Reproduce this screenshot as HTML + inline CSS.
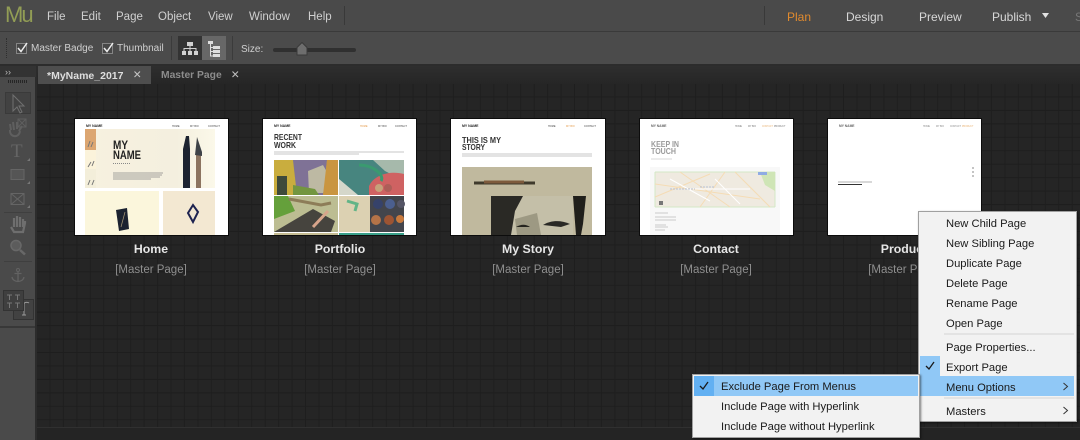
<!DOCTYPE html>
<html><head><meta charset="utf-8">
<style>
html,body{margin:0;padding:0;background:#222}
#r{position:relative;width:1080px;height:440px;overflow:hidden;background:#222;font-family:"Liberation Sans",sans-serif}
.a{position:absolute}
.t{position:absolute;white-space:nowrap;line-height:14px}
.m{color:#d0d0d0;font-size:11.500px;top:10px}
.v{color:#d8d8d8;font-size:12px;top:10px}
.c{color:#cfcfcf;font-size:10px;top:42px}
.name{position:absolute;width:154px;text-align:center;color:#e6e6e6;font-weight:bold;font-size:12.300px;top:242px;line-height:14px}
.mp{position:absolute;width:154px;text-align:center;color:#8f8f8f;font-size:11.500px;top:263px;line-height:14px}
.th{position:absolute;top:119px;width:153px;height:116px;background:#fff;box-shadow:0 0 0 1px #0c0c0c;overflow:hidden}
.th svg{filter:blur(.35px);display:block}
.i{position:absolute;color:#1a1a1a;font-size:11.200px;line-height:20px;height:20px;white-space:nowrap;padding-left:28px;box-sizing:border-box}
.sep{position:absolute;height:2px;background:#e3e3e3}
</style></head><body>
<div id="r">
<!-- menu bar -->
<div class="a" style="left:0;top:0;width:1080px;height:31px;background:#4a4a4a"></div>
<div class="a" style="left:0;top:31px;width:1080px;height:1px;background:#3a3a3a"></div>
<div class="t" style="left:5px;top:3px;font-size:22px;line-height:24px;letter-spacing:-2px;color:#929d55">Mu</div>
<div class="t m" style="left:47px">File</div>
<div class="t m" style="left:81px">Edit</div>
<div class="t m" style="left:116px">Page</div>
<div class="t m" style="left:158px">Object</div>
<div class="t m" style="left:208px">View</div>
<div class="t m" style="left:249px">Window</div>
<div class="t m" style="left:308px">Help</div>
<div class="a" style="left:344px;top:6px;width:1px;height:19px;background:#393939"></div>
<div class="a" style="left:764px;top:6px;width:1px;height:19px;background:#393939"></div>
<div class="t v" style="left:787px;color:#e08a2e">Plan</div>
<div class="t v" style="left:846px">Design</div>
<div class="t v" style="left:919px">Preview</div>
<div class="t v" style="left:992px">Publish</div>
<svg class="a" style="left:1041px;top:13px" width="9" height="6"><path d="M1 0H8L4.500 5Z" fill="#e2e2e2"/></svg>
<div class="t v" style="left:1075px;color:#777">S</div>
<!-- toolbar -->
<div class="a" style="left:0;top:32px;width:1080px;height:32px;background:#4b4b4b"></div>
<div class="a" style="left:0;top:64px;width:1080px;height:2px;background:#2c2c2c"></div>
<div class="a" style="left:6px;top:38px;width:1px;height:20px;border-left:1px dotted #2e2e2e"></div>
<svg class="a" style="left:16px;top:41px" width="150" height="18" fill="none">
<rect x="0.500" y="2.500" width="10" height="10" stroke="#858585" fill="#474747"/>
<path d="M2 7L5 10.500L11 2" stroke="#eee" stroke-width="1.500"/>
<rect x="86.500" y="2.500" width="10" height="10" stroke="#858585" fill="#474747"/>
<path d="M88 7L91 10.500L97 2" stroke="#eee" stroke-width="1.500"/>
</svg>
<div class="t c" style="left:31px">Master Badge</div>
<div class="t c" style="left:117px">Thumbnail</div>
<div class="a" style="left:171px;top:36px;width:1px;height:24px;background:#3b3b3b"></div>
<div class="a" style="left:178px;top:36px;width:24px;height:24px;background:#333"></div>
<div class="a" style="left:202px;top:36px;width:24px;height:24px;background:#676767"></div>
<svg class="a" style="left:177px;top:36px" width="49" height="24" fill="none">
<g fill="#d0d0d0"><rect x="10" y="6" width="6" height="4"/><rect x="5" y="15" width="4" height="4"/><rect x="11" y="15" width="4" height="4"/><rect x="17" y="15" width="4" height="4"/></g>
<path d="M13 10V15M7 15V12.500H19V15" stroke="#d0d0d0"/>
<g fill="#dedede"><rect x="31" y="5" width="5" height="3"/><rect x="36" y="10" width="7" height="3"/><rect x="36" y="14" width="7" height="3"/><rect x="36" y="18" width="7" height="3"/></g>
<path d="M33.500 8V20H36M33.500 11.500H36M33.500 15.500H36" stroke="#dedede"/>
</svg>
<div class="a" style="left:232px;top:36px;width:1px;height:24px;background:#3b3b3b"></div>
<div class="t c" style="left:241px;top:43px">Size:</div>
<div class="a" style="left:273px;top:48px;width:83px;height:4px;background:#303030;border-radius:2px"></div>
<svg class="a" style="left:296px;top:42px" width="12" height="14"><path d="M1 5.500L6 .5L11 5.500V13H1Z" fill="#6e6e6e" stroke="#3a3a3a"/></svg>
<!-- tab strip -->
<div class="a" style="left:37px;top:66px;width:1043px;height:18px;background:linear-gradient(#2e2e2e,#262626)"></div>
<div class="a" style="left:38px;top:66px;width:113px;height:18px;background:#4e4e4e"></div>
<div class="t" style="left:47px;top:69px;font-size:10.500px;font-weight:bold;color:#dedede">*MyName_2017</div>
<svg class="a" style="left:133px;top:70px" width="9" height="9" fill="none"><path d="M1.500 1.500L7 7M7 1.500L1.500 7" stroke="#c4c4c4" stroke-width="1.100"/></svg>
<div class="t" style="left:161px;top:69px;font-size:10.300px;font-weight:bold;color:#8c8c8c">Master Page</div>
<svg class="a" style="left:231px;top:70px" width="9" height="9" fill="none"><path d="M1.500 1.500L7 7M7 1.500L1.500 7" stroke="#bdbdbd" stroke-width="1.100"/></svg>
<!-- canvas -->
<svg class="a" style="left:37px;top:84px" width="1043" height="356">
<defs><pattern id="g" x="0" y="0" width="13.450" height="13.450" patternUnits="userSpaceOnUse"><path d="M13 0V13.450M0 13H13.450" stroke="#1e1e1e" stroke-width="1"/></pattern></defs>
<rect width="1043" height="356" fill="#252525"/>
<rect width="1043" height="343" fill="url(#g)"/>
<rect y="343" width="1043" height="1" fill="#303030"/>
<rect y="344" width="1043" height="12" fill="#242424"/>
</svg>
<!-- left panel -->
<div class="a" style="left:0;top:66px;width:36px;height:374px;background:#4a4a4a"></div>
<div class="a" style="left:35px;top:66px;width:2px;height:374px;background:#2c2c2c"></div>
<div class="a" style="left:0;top:66px;width:36px;height:11px;background:#333"></div>
<div class="t" style="left:5px;top:65px;font-size:9px;color:#bbb">››</div>
<div class="a" style="left:8px;top:80px;width:20px;height:3px;background:repeating-linear-gradient(90deg,#262626 0 1px,transparent 1px 2px)"></div>
<div class="a" style="left:0;top:326px;width:35px;height:2px;background:#383838"></div>
<svg class="a" style="left:0;top:90px" width="36" height="240" fill="none" stroke="#666">
<rect x="5.500" y="2.500" width="25" height="21" stroke="#3a3a3a" fill="#424242"/>
<path d="M13 5V21L17 17L20 23L22 22L19 16H24Z" stroke="#707070"/>
<path d="M11 40L10 34M14 40L13 32M17 39V32M19 41L22 36M10 40C9 47 19 49 20 41" stroke-width="2" stroke="#5f5f5f"/>
<rect x="18" y="29" width="8" height="8" stroke="#5f5f5f"/>
<path d="M18 29L26 37M26 29L18 37" stroke="#5f5f5f"/>
<text x="11" y="67" font-size="19" font-family="Liberation Serif" fill="#656565" stroke="none">T</text>
<rect x="11" y="79.500" width="13" height="10" fill="#555" stroke="#656565"/>
<rect x="11" y="103.500" width="13" height="11" stroke="#656565"/>
<path d="M11 103.500L24 114.500M24 103.500L11 114.500" stroke="#656565"/>
<path d="M30 71V68L27 71ZM30 94V91L27 94ZM30 118V115L27 118Z" fill="#777" stroke="none"/>
<path d="M11 137L14 142H23L25 133V131M14 137V128M17 137V126M20 137V127M23 137V129" stroke="#6e6e6e" stroke-width="2.200"/>
<circle cx="16" cy="155.500" r="5" stroke="#686868" stroke-width="1.500" fill="#5c5c5c"/>
<path d="M20 160L25 164.500" stroke="#686868" stroke-width="2.500"/>
<path d="M4 122.500H32M4 171.500H32" stroke="#3f3f3f"/>
<path d="M18 181V192M14.500 183.500H21.500M12 187C13 193 23 193 24 187" stroke="#626262" stroke-width="1.300"/>
<circle cx="18" cy="180" r="1.500" stroke="#626262"/>
<rect x="13.500" y="209.500" width="20" height="20" stroke="#333" fill="#424242"/>
<path d="M22 225H26M24 225V214C24 212 28 212 29 213" stroke="#9a9a9a"/>
<rect x="3.500" y="200.500" width="20" height="20" stroke="#333" fill="#3f3f3f"/>
<path d="M7 205H12M9.500 205V210M15 205H20M17.500 205V210M7 213H12M9.500 213V218M15 213H20M17.500 213V218" stroke="#777"/>
</svg>
<!-- thumb 1 -->
<div class="th" style="left:75px">
<svg width="153" height="116">
<defs><linearGradient id="hg" x1="0" x2="1" y1="0" y2="0"><stop offset="0" stop-color="#f7f1df"/><stop offset=".7" stop-color="#f4efdf"/><stop offset="1" stop-color="#fbf8e9"/></linearGradient></defs>
<text x="11" y="8" font-size="3.500" font-weight="bold" fill="#222">MY NAME</text>
<text x="97" y="8" font-size="2.500" fill="#444">HOME</text><text x="115" y="8" font-size="2.500" fill="#444">MY BIO</text><text x="133" y="8" font-size="2.500" fill="#444">CONTACT</text>
<rect x="10" y="10" width="130" height="59" fill="url(#hg)"/>
<rect x="10" y="10" width="11" height="21" fill="#dca671"/>
<rect x="10" y="31" width="11" height="19" fill="#fbf3db"/><rect x="10" y="50" width="11" height="19" fill="#f3eeda"/>
<path d="M13 28L15 22M16 28L18 23M13 48L16 43M17 47L19 42M13 66L15 61M17 66L19 61" stroke="#777"/>
<text x="38" y="30" font-size="12" fill="#222" font-weight="bold" textLength="15" lengthAdjust="spacingAndGlyphs">MY</text>
<text x="38" y="40" font-size="12" fill="#222" font-weight="bold" textLength="28" lengthAdjust="spacingAndGlyphs">NAME</text>
<path d="M38 44.500H56" stroke="#888" stroke-dasharray="1 1"/>
<path d="M38 54H88M38 56H87M38 58H85M38 60H76" stroke="#888" stroke-width=".8"/>
<rect x="108" y="30" width="7" height="39" fill="#1d2330"/><path d="M108 30L111 17L114 17L115 30Z" fill="#1d2330"/>
<rect x="121" y="36" width="5" height="33" fill="#8c7460"/><path d="M120 36L122 18L127 33V37Z" fill="#3f4348"/>
<rect x="10" y="72" width="74" height="44" fill="#fbf6dc"/>
<rect x="88" y="72" width="52" height="44" fill="#f3e8d2"/>
<path d="M41 91L52 89L54 110L44 112Z" fill="#1b2230"/><path d="M46 108L50 93" stroke="#a97" stroke-width=".7"/>
<path d="M113 94L118 86L123 93L118 103Z" fill="#f3e8d2" stroke="#1e2350" stroke-width="2"/>
</svg></div>
<!-- thumb 2 -->
<div class="th" style="left:263px">
<svg width="153" height="116">
<text x="11" y="8" font-size="3.500" font-weight="bold" fill="#222">MY NAME</text>
<text x="97" y="8" font-size="2.500" fill="#e49a4a">HOME</text><text x="115" y="8" font-size="2.500" fill="#444">MY BIO</text><text x="132" y="8" font-size="2.500" fill="#444">CONTACT</text>
<text x="11" y="21" font-size="8.500" font-weight="bold" fill="#333" textLength="28" lengthAdjust="spacingAndGlyphs">RECENT</text>
<text x="11" y="29" font-size="8.500" font-weight="bold" fill="#333" textLength="22" lengthAdjust="spacingAndGlyphs">WORK</text>
<path d="M11 33H141M11 35H96" stroke="#b5b5b5" stroke-width=".8"/>
<rect x="11" y="41" width="64" height="35" fill="#b3a945"/>
<path d="M11 41H30L34 76H11Z" fill="#c9ad3e"/><path d="M30 41H64L60 76H34Z" fill="#7f7296"/>
<path d="M45 52L60 46L68 60L60 74H46Z" fill="#bdb9a3"/><rect x="14" y="57" width="10" height="19" fill="#3e4a3b"/><path d="M64 41H75V76H60Z" fill="#c99540"/><path d="M30 66L52 70L56 76H30Z" fill="#73963f"/>
<rect x="76" y="41" width="65" height="35" fill="#47857f"/>
<path d="M76 41H110L122 52L141 62V41Z" fill="#a6b9ab"/><path d="M106 67C112 54 130 52 141 55V76H106Z" fill="#cf6262"/><path d="M76 60L95 76H76Z" fill="#d5d7ca"/><circle cx="116" cy="69" r="4" fill="#c6a27a"/><circle cx="125" cy="69" r="4" fill="#ad5e58"/><path d="M96 46C110 46 122 56 118 62" stroke="#3a9a70" stroke-width="3" fill="none"/>
<rect x="11" y="77" width="64" height="36" fill="#bcbd92"/>
<path d="M11 77H25L32 92L11 100Z" fill="#65a03b"/><path d="M11 113L50 90L72 102L68 113Z" fill="#46443e"/><path d="M26 80L58 86L68 84" stroke="#8d7d58" stroke-width="3" fill="none"/><path d="M50 108L65 92" stroke="#d7a58b" stroke-width="3"/>
<rect x="76" y="77" width="65" height="36" fill="#dcd1b2"/>
<path d="M107 77H141V113H107Z" fill="#43454c"/><circle cx="115" cy="85" r="5" fill="#36426a"/><circle cx="127" cy="85" r="5" fill="#4b5f8f"/><circle cx="113" cy="101" r="5" fill="#b47348"/><circle cx="126" cy="101" r="5" fill="#9d5433"/><circle cx="137" cy="100" r="4" fill="#c97a3d"/><circle cx="138" cy="85" r="4" fill="#556"/><path d="M84 82L94 85L92 92" stroke="#62b487" stroke-width="3" fill="none"/>
<rect x="11" y="114" width="64" height="2" fill="#c5bc92"/><rect x="76" y="114" width="65" height="2" fill="#3aa08a"/>
</svg></div>
<!-- thumb 3 -->
<div class="th" style="left:451px;width:154px">
<svg width="154" height="116">
<text x="11" y="8" font-size="3.500" font-weight="bold" fill="#222">MY NAME</text>
<text x="97" y="8" font-size="2.500" fill="#444">HOME</text><text x="115" y="8" font-size="2.500" fill="#e49a4a">MY BIO</text><text x="133" y="8" font-size="2.500" fill="#444">CONTACT</text>
<text x="11" y="24" font-size="8.500" font-weight="bold" fill="#333" textLength="39" lengthAdjust="spacingAndGlyphs">THIS IS MY</text>
<text x="11" y="31" font-size="8.500" font-weight="bold" fill="#333" textLength="23" lengthAdjust="spacingAndGlyphs">STORY</text>
<path d="M11 35H141M11 37H141" stroke="#b5b5b5" stroke-width=".8"/>
<rect x="11" y="48" width="130" height="68" fill="#c0b99e"/>
<rect x="40" y="77" width="82" height="39" fill="#c4bfa8"/>
<path d="M40 77H72L64 92L60 116H40Z" fill="#2a2925"/>
<path d="M64 100L86 94L90 116H66Z" fill="#9d9983"/>
<path d="M92 106C100 101 110 101 119 105L110 108Z" fill="#2a2925"/><path d="M65 108C70 105 75 105 79 108Z" fill="#25241f"/>
<path d="M122 77H135L132 105L130 116H125Z" fill="#201f1b"/>
<path d="M23 64H84" stroke="#3f3a2c" stroke-width="3"/><rect x="33" y="61.500" width="40" height="3" fill="#7d5a3c"/>
</svg></div>
<!-- thumb 4 -->
<div class="th" style="left:640px">
<svg width="153" height="116">
<text x="11" y="8" font-size="3.300" font-weight="bold" fill="#666">MY NAME</text>
<text x="95" y="8" font-size="2.300" fill="#777">HOME</text><text x="108" y="8" font-size="2.300" fill="#777">MY BIO</text><text x="122" y="8" font-size="2.300" fill="#e8b070">CONTACT</text><text x="134" y="8" font-size="2.300" fill="#777">PRODUCT</text>
<text x="11" y="28" font-size="8.500" font-weight="bold" fill="#9a9a9a" textLength="28" lengthAdjust="spacingAndGlyphs">KEEP IN</text>
<text x="11" y="35" font-size="8.500" font-weight="bold" fill="#9a9a9a" textLength="25" lengthAdjust="spacingAndGlyphs">TOUCH</text>
<path d="M11 40H32" stroke="#ccc" stroke-width=".8"/>
<rect x="10" y="48" width="130" height="68" fill="#f8f8f8"/>
<rect x="15" y="53" width="120" height="35" fill="#efeae0"/>
<path d="M15 53V88M135 53V88M15 53H135M15 88H135" stroke="#d3e8c6"/>
<path d="M120 53H135V72L125 66Z" fill="#cfe5b6"/>
<path d="M15 78L70 55M40 53L90 88M60 88L85 53M15 65L120 80M95 53L130 88" stroke="#f5dcb5" stroke-width="1"/>
<path d="M30 60L70 82M50 70H110M75 60L100 85" stroke="#fff" stroke-width="1"/>
<path d="M30 70H55M60 68H75" stroke="#a5b4d2" stroke-width=".8" stroke-dasharray="2 1"/>
<rect x="19" y="82" width="4" height="4" fill="#777"/><rect x="118" y="53" width="9" height="3" fill="#8fabe4"/>
<path d="M15 94H28M15 98H36M15 101H36M15 106H26M15 108H28M15 111H25" stroke="#bbb" stroke-width=".8"/>
</svg></div>
<!-- thumb 5 -->
<div class="th" style="left:828px">
<svg width="153" height="116">
<text x="11" y="8" font-size="3.300" font-weight="bold" fill="#666">MY NAME</text>
<text x="95" y="8" font-size="2.300" fill="#888">HOME</text><text x="108" y="8" font-size="2.300" fill="#888">MY BIO</text><text x="122" y="8" font-size="2.300" fill="#888">CONTACT</text><text x="134" y="8" font-size="2.300" fill="#e8b070">PRODUCT</text>
<path d="M10 63H44" stroke="#999" stroke-width=".8"/><path d="M10 65.500H34" stroke="#333" stroke-width=".9"/>
<path d="M145 48V50M145 52V54M145 56V58" stroke="#888"/>
</svg></div>
<!-- labels -->
<div class="name" style="left:74px">Home</div><div class="mp" style="left:74px">[Master Page]</div>
<div class="name" style="left:263px">Portfolio</div><div class="mp" style="left:263px">[Master Page]</div>
<div class="name" style="left:451px">My Story</div><div class="mp" style="left:451px">[Master Page]</div>
<div class="name" style="left:639px">Contact</div><div class="mp" style="left:639px">[Master Page]</div>
<div class="name" style="left:827px">Product</div><div class="mp" style="left:827px">[Master Page]</div>
<!-- context menu -->
<div class="a" style="left:918px;top:211px;width:159px;height:211px;background:#f2f2f2;border:1px solid #a0a0a0;box-sizing:border-box;box-shadow:1px 1px 2px rgba(0,0,0,.5)"></div>
<div class="i" style="left:918px;top:214px">New Child Page</div>
<div class="i" style="left:918px;top:234px">New Sibling Page</div>
<div class="i" style="left:918px;top:254px">Duplicate Page</div>
<div class="i" style="left:918px;top:274px">Delete Page</div>
<div class="i" style="left:918px;top:294px">Rename Page</div>
<div class="i" style="left:918px;top:314px">Open Page</div>
<div class="sep" style="left:944px;top:333px;width:130px"></div>
<div class="i" style="left:918px;top:338px">Page Properties...</div>
<div class="a" style="left:920px;top:356px;width:20px;height:20px;background:#90c8f6"></div>
<svg class="a" style="left:924px;top:360px" width="12" height="11" fill="none"><path d="M2 6L5 9L10 2" stroke="#1a1a1a" stroke-width="1.300"/></svg>
<div class="i" style="left:918px;top:358px">Export Page</div>
<div class="a" style="left:920px;top:376px;width:154px;height:20px;background:#90c8f6"></div>
<div class="i" style="left:918px;top:378px">Menu Options</div>
<svg class="a" style="left:1062px;top:382px" width="7" height="9" fill="none"><path d="M1.500 1L5.500 4.500L1.500 8" stroke="#333"/></svg>
<div class="sep" style="left:944px;top:397px;width:130px"></div>
<div class="i" style="left:918px;top:402px">Masters</div>
<svg class="a" style="left:1062px;top:406px" width="7" height="9" fill="none"><path d="M1.500 1L5.500 4.500L1.500 8" stroke="#333"/></svg>
<!-- submenu -->
<div class="a" style="left:692px;top:374px;width:228px;height:64px;background:#f2f2f2;border:1px solid #a0a0a0;box-sizing:border-box;box-shadow:1px 1px 2px rgba(0,0,0,.5)"></div>
<div class="a" style="left:694px;top:376px;width:224px;height:20px;background:#90c8f6"></div>
<div class="a" style="left:694px;top:376px;width:20px;height:20px;background:#62b0f2"></div>
<svg class="a" style="left:698px;top:380px" width="12" height="11" fill="none"><path d="M2 6L5 9L10 2" stroke="#1a1a1a" stroke-width="1.300"/></svg>
<div class="i" style="left:693px;top:377px;">Exclude Page From Menus</div>
<div class="i" style="left:693px;top:397px">Include Page with Hyperlink</div>
<div class="i" style="left:693px;top:417px">Include Page without Hyperlink</div>
</div>
</body></html>
